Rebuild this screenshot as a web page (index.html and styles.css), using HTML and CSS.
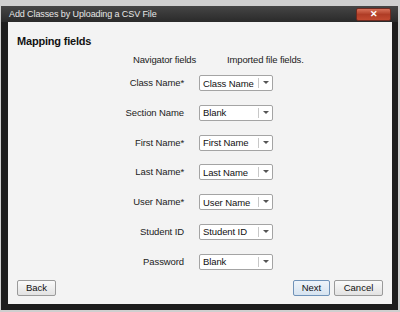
FILE: index.html
```html
<!DOCTYPE html>
<html lang="en">
<head>
    <meta charset="UTF-8">
    <title>Add Classes by Uploading a CSV File</title>
    <link rel="stylesheet" href="styles.css">
</head>
<body>
    <div class="window">
        <div class="titlebar">
            <span class="title">Add Classes by Uploading a CSV File</span>
            <div class="close">&#x2715;</div>
        </div>

        <div class="content">
            <h2>Mapping fields</h2>
            <div class="col-heads">
                <span>Navigator fields</span>
                <span>Imported file fields.</span>
            </div>

            <div class="mapping">
                <label>Class Name*</label>
                <div class="combo"><span>Class Name</span><i></i></div>

                <label>Section Name</label>
                <div class="combo"><span>Blank</span><i></i></div>

                <label>First Name*</label>
                <div class="combo"><span>First Name</span><i></i></div>

                <label>Last Name*</label>
                <div class="combo"><span>Last Name</span><i></i></div>

                <label>User Name*</label>
                <div class="combo"><span>User Name</span><i></i></div>

                <label>Student ID</label>
                <div class="combo"><span>Student ID</span><i></i></div>

                <label>Password</label>
                <div class="combo"><span>Blank</span><i></i></div>
            </div>

            <div class="footer">
                <button class="btn back">Back</button>
                <div class="right-btns">
                    <button class="btn default">Next</button>
                    <button class="btn cancel">Cancel</button>
                </div>
            </div>
        </div>
    </div>
</body>
</html>
```

FILE: styles.css
```css
* {
    margin: 0;
    padding: 0;
    box-sizing: border-box;
}
body {
    font-family: 'Liberation Sans', Arial, sans-serif;
    background-color: #cfcfcf;
    width: 400px;
    height: 312px;
    overflow: hidden;
}
.window {
    margin: 6px 2px 0 1px;
    height: 304px;
    background-color: #1d1d1d;
    padding: 0 6px 6px 7px;
    display: flex;
    flex-direction: column;
}
.titlebar {
    height: 16px;
    display: flex;
    align-items: center;
    justify-content: space-between;
    background: linear-gradient(#454545, #2a2a2a);
    margin: 0 -6px 0 -7px;
    padding: 0 7px 0 8px;
}
.title {
    color: #e6e6e6;
    font-size: 9px;
    letter-spacing: -0.1px;
    line-height: 16px;
}
.close {
    width: 35px;
    height: 13px;
    margin-top: 1px;
    border: 1px solid #6e2a20;
    border-radius: 2px;
    background: linear-gradient(#d8725a, #b03d26 50%, #c24a30);
    color: #fff;
    font-size: 9px;
    font-weight: bold;
    line-height: 11px;
    text-align: center;
}
.content {
    flex: 1;
    background-color: #f3f3f3;
    padding: 12px 9px 0 9px;
    display: flex;
    flex-direction: column;
}
h2 {
    font-size: 11px;
    letter-spacing: -0.2px;
    line-height: 14px;
    color: #111;
}
.col-heads {
    display: flex;
    gap: 31px;
    margin-top: 6px;
    padding-left: 116px;
    font-size: 9.5px;
    letter-spacing: -0.15px;
    line-height: 12px;
    color: #222;
}
.mapping {
    display: grid;
    grid-template-columns: 167px 74px;
    column-gap: 15px;
    row-gap: 13.8px;
    margin-top: 9px;
}
.mapping label {
    font-size: 9.5px;
    letter-spacing: -0.1px;
    line-height: 16px;
    color: #222;
    text-align: right;
}
.combo {
    height: 16px;
    display: flex;
    align-items: center;
    background-color: #fff;
    border: 1px solid #a4a4a4;
    border-radius: 2px;
    font-size: 9.5px;
    letter-spacing: -0.1px;
    color: #111;
}
.combo span {
    flex: 1;
    padding-left: 3px;
    white-space: nowrap;
    overflow: hidden;
}
.combo i {
    width: 14px;
    height: 10px;
    border-left: 1px solid #c8c8c8;
    position: relative;
}
.combo i::after {
    content: '';
    position: absolute;
    left: 4px;
    top: 3px;
    border-left: 3px solid transparent;
    border-right: 3px solid transparent;
    border-top: 3px solid #555;
}
.footer {
    display: flex;
    justify-content: space-between;
    margin-top: 10px;
}
.right-btns {
    display: flex;
    gap: 4px;
}
.btn {
    width: 37px;
    height: 16px;
    font-family: inherit;
    font-size: 9.5px;
    color: #111;
    background: linear-gradient(#fafafa, #e2e2e2);
    border: 1px solid #9a9a9a;
    border-radius: 2px;
}
.btn.back {
    width: 39px;
}
.btn.cancel {
    width: 49px;
}
.btn.default {
    border-color: #6f92b8;
    background: linear-gradient(#eef4fa, #d6e3f0);
}
```
